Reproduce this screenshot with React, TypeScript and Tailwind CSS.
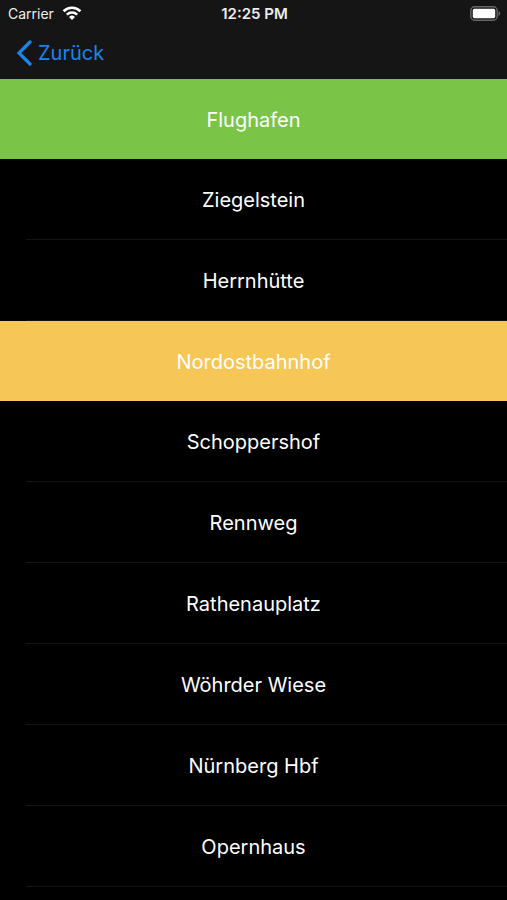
const STATIONS = [
  { name: "Flughafen", row: "bg-[#7ac547]" },
  { name: "Ziegelstein" },
  { name: "Herrnhütte" },
  { name: "Nordostbahnhof", row: "bg-[#f6c657]" },
  { name: "Schoppershof" },
  { name: "Rennweg" },
  { name: "Rathenauplatz" },
  { name: "Wöhrder Wiese" },
  { name: "Nürnberg Hbf" },
  { name: "Opernhaus" },
];

function WifiIcon() {
  return (
    <svg viewBox="0 0 20 14" className="mb-0.5 h-[14px] w-5" fill="none" aria-hidden="true">
      <path d="M1.6 5.2a11.9 11.9 0 0 1 16.8 0" stroke="white" strokeWidth="2.7" />
      <path d="M4.8 8.6a7.4 7.4 0 0 1 10.4 0" stroke="white" strokeWidth="2.4" />
      <path d="M10 13.9 7 10.9a4.3 4.3 0 0 1 6 0z" fill="white" />
    </svg>
  );
}

function BatteryIcon() {
  return (
    <svg viewBox="0 0 31 15" className="mb-0.5 h-[15px] w-[31px]" fill="none" aria-hidden="true">
      <rect x="0.8" y="0.8" width="26.4" height="13.4" rx="4" stroke="#68686a" strokeWidth="1.4" />
      <rect x="2.8" y="2.8" width="22.4" height="9.4" rx="1.6" fill="white" />
      <path d="M28.6 5c2.2.9 2.2 4.1 0 5z" fill="#68686a" />
    </svg>
  );
}

function StatusBar() {
  return (
    <div className="grid h-7 grid-cols-3 items-center pr-1.5 pl-2 text-sm text-[#ededed]">
      <div className="flex items-center gap-2">
        <span>Carrier</span>
        <WifiIcon />
      </div>
      <div className="text-center text-[15px] font-semibold">12:25 PM</div>
      <div className="flex justify-end">
        <BatteryIcon />
      </div>
    </div>
  );
}

export default function App() {
  return (
    <div className="min-h-screen bg-black font-['Inter','Liberation_Sans',sans-serif] text-white">
      <header className="bg-[#151515]">
        <StatusBar />
        <nav className="flex h-[51px] items-center px-4 pb-0.5">
          <button className="flex items-center gap-1.5 text-xl text-[#1a84ef]">
            <svg viewBox="0 0 16 26" className="h-[26px] w-4" fill="none" aria-hidden="true">
              <path d="M14 2 3 13l11 11" stroke="currentColor" strokeWidth="3.2" strokeLinecap="round" />
            </svg>
            Zurück
          </button>
        </nav>
      </header>
      <ul>
        {STATIONS.map((s) => (
          <li key={s.name} className={s.row}>
            <button className="block h-20 w-full pt-0.5 text-center text-xl">{s.name}</button>
            {!s.row && <div className="ml-[26px] h-px bg-[#141414]" />}
          </li>
        ))}
      </ul>
    </div>
  );
}
